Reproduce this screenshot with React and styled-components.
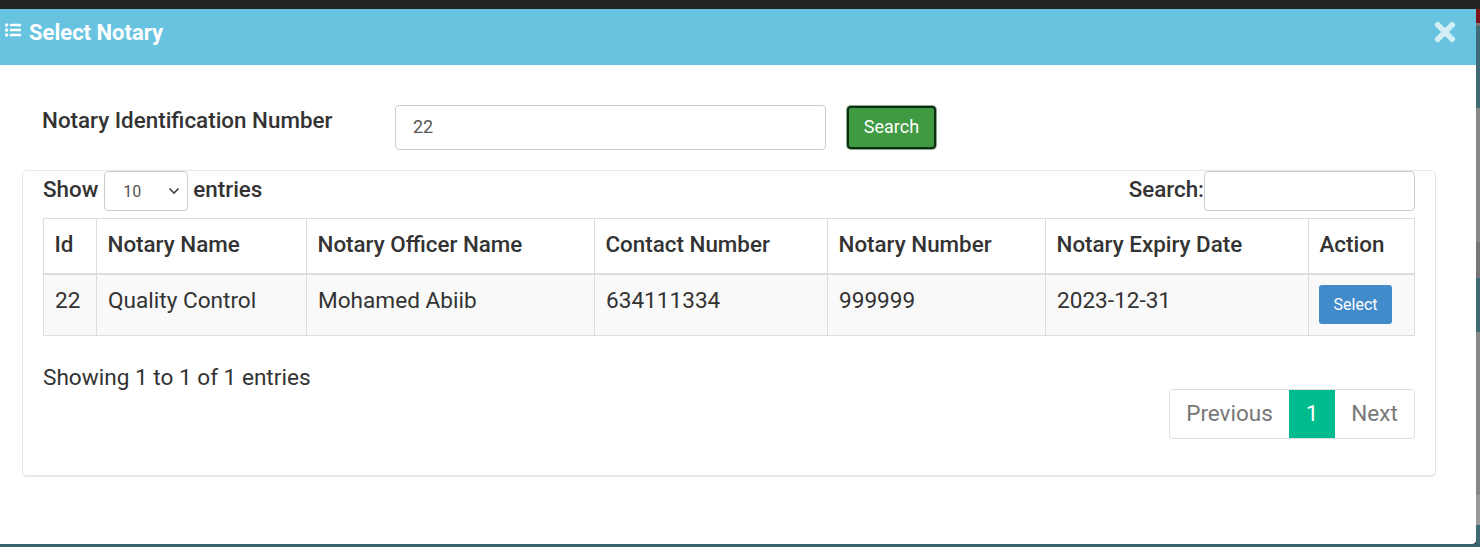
import styled, { createGlobalStyle } from "styled-components";
import { FaListUl, FaTimes } from "react-icons/fa";

const GlobalStyle = createGlobalStyle`
  html, body {
    margin: 0;
    padding: 0;
    background: #222;
    overflow: hidden;
  }
  * {
    box-sizing: border-box;
  }
`;

const Page = styled.div`
  width: 1480px;
  height: 547px;
  display: flex;
  flex-direction: column;
  background: #222;
  font-family: Roboto, "Liberation Sans", sans-serif;
  color: #333;
`;

const Middle = styled.div`
  flex: 1;
  margin-top: 9px;
  display: flex;
  min-height: 0;
`;

const Modal = styled.div`
  width: 1476px;
  background: #fff;
  border-bottom-right-radius: 4px;
  display: flex;
  flex-direction: column;
`;

const Behind = styled.div`
  flex: 1;
  display: flex;
  flex-direction: column;
`;

const Stripe = styled.div`
  height: ${({ h }) => h}px;
  flex: ${({ h }) => (h ? "none" : 1)};
  background: ${({ color }) => color};
`;

const BottomEdge = styled.div`
  height: 3px;
  background: #38626f;
`;

const Header = styled.div`
  height: 56px;
  flex: none;
  background: #67c3df;
  color: #fff;
  display: flex;
  justify-content: space-between;
  padding: 12px 16px 0 5px;
`;

const Title = styled.h4`
  margin: 0;
  display: flex;
  gap: 8px;
  font-size: 22px;
  line-height: 24px;
  font-weight: 700;

  svg {
    width: 16px;
    height: 16px;
    margin-top: 1px;
    stroke: #fff;
    stroke-width: 16px;
  }
`;

const Close = styled.span`
  color: #d4eef6;
  font-size: 30px;
  line-height: 30px;
  margin-top: -4px;

  svg {
    display: block;
    width: 30px;
    height: 30px;
  }
`;

const Body = styled.div`
  padding: 40px 40px 0 22px;
`;

const SearchRow = styled.form`
  display: flex;
  align-items: flex-start;
  height: 65px;
`;

const FieldLabel = styled.label`
  width: 373px;
  padding: 3px 0 0 20px;
  font-size: 22.4px;
  line-height: 24px;
  font-weight: 500;
`;

const TextInput = styled.input`
  width: ${({ width }) => width}px;
  height: ${({ height }) => height}px;
  border: 1px solid #ccc;
  border-radius: 4px;
  padding: 0 17px 2px;
  background: #fff;
  font: 400 18px Roboto, sans-serif;
  color: #555;
  outline: none;
`;

const SearchButton = styled.button`
  width: 89px;
  height: 43px;
  margin: 1px 0 0 21px;
  padding: 0 0 2px;
  background: #3f9a41;
  color: #fff;
  border: 2px solid #0c2f12;
  border-radius: 4px;
  box-shadow: 0 0 0 1px #8da38e;
  font: 400 18px Roboto, sans-serif;
`;

const Card = styled.div`
  width: 1414px;
  height: 307px;
  border: 1px solid #e7e7e7;
  border-bottom-width: 2px;
  border-radius: 5px;
  padding: 0 20px;
`;

const TableTop = styled.div`
  display: flex;
  justify-content: space-between;
  height: 47px;
`;

const TopLabel = styled.label`
  display: flex;
  align-items: flex-start;
  font-size: 22.4px;
  line-height: 37px;
  font-weight: 500;
`;

const PageSize = styled.select`
  appearance: none;
  width: 84px;
  height: 40px;
  margin: 0 5px 0 6px;
  padding: 0 12px 0 18px;
  border: 1px solid #ccc;
  border-radius: 4px;
  background: #fff url("data:image/svg+xml,%3Csvg xmlns='http://www.w3.org/2000/svg' width='12' height='8' viewBox='0 0 12 8'%3E%3Cpath d='M1.5 1.5 6 6l4.500-4.500' fill='none' stroke='%23444' stroke-width='1.600'/%3E%3C/svg%3E") no-repeat right 7px center;
  color: #555;
  font: 400 16px Roboto, sans-serif;
`;

const Table = styled.table`
  width: 1372px;
  table-layout: fixed;
  border-collapse: collapse;
`;

const Th = styled.th`
  height: 55px;
  padding: 0 11px 4px 10.5px;
  border: 1px solid #ddd;
  border-bottom-width: 2px;
  font-size: 22.4px;
  font-weight: 500;
  text-align: left;
`;

const Td = styled.td`
  height: 62px;
  padding: 0 11px 8px;
  border: 1px solid #ddd;
  background: #f9f9f9;
  font-size: 22.6px;
  font-weight: 400;
`;

const ActionTd = styled(Td)`
  padding: 0 10px;
`;

const SelectButton = styled.button`
  display: block;
  width: 73px;
  height: 39px;
  border: none;
  border-radius: 3px;
  background: #428bca;
  color: #fff;
  font: 400 16px Roboto, sans-serif;
`;

const TableBottom = styled.div`
  display: flex;
  flex-direction: column;
  padding-top: 29px;
`;

const Info = styled.div`
  font-size: 22.6px;
  line-height: 26px;
  font-weight: 400;
`;

const Pager = styled.div`
  align-self: flex-end;
  display: flex;
  height: 50px;
  margin-top: -2px;
  border: 1px solid #ddd;
  border-radius: 4px;
  overflow: hidden;
`;

const PagerItem = styled.a`
  display: flex;
  align-items: center;
  justify-content: center;
  width: ${({ width }) => width}px;
  padding-bottom: 2px;
  background: ${({ active }) => (active ? "#00bb8d" : "#fff")};
  color: ${({ active }) => (active ? "#fff" : "#777")};
  font-size: 22.5px;
`;

const columns = [
  { label: "Id", width: 53, value: "22" },
  { label: "Notary Name", width: 210, value: "Quality Control" },
  { label: "Notary Officer Name", width: 288, value: "Mohamed Abiib" },
  { label: "Contact Number", width: 233, value: "634111334" },
  { label: "Notary Number", width: 218, value: "999999" },
  { label: "Notary Expiry Date", width: 263, value: "2023-12-31" },
];

// what shows of the page behind the modal, top to bottom
const stripes = [
  { h: 14, color: "#7d1418" },
  { h: 3, color: "#777" },
  { h: 82, color: "#3e6a75" },
  { h: 134, color: "#888" },
  { h: 36, color: "#777" },
  { h: 54, color: "#3e6a75" },
  { h: 163, color: "#888" },
  { h: 30, color: "#999" },
  { h: 0, color: "#3e6a75" },
];

export default function App() {
  return (
    <Page>
      <GlobalStyle />
      <Middle>
        <Modal>
          <Header>
            <Title>
              <FaListUl />
              Select Notary
            </Title>
            <Close>
              <FaTimes />
            </Close>
          </Header>
          <Body>
            <SearchRow onSubmit={(e) => e.preventDefault()}>
              <FieldLabel>Notary Identification Number</FieldLabel>
              <TextInput width={431} height={45} defaultValue="22" />
              <SearchButton>Search</SearchButton>
            </SearchRow>
            <Card>
              <TableTop>
                <TopLabel>
                  Show
                  <PageSize defaultValue="10">
                    <option>10</option>
                    <option>25</option>
                    <option>50</option>
                  </PageSize>
                  entries
                </TopLabel>
                <TopLabel>
                  Search:
                  <TextInput width={211} height={40} />
                </TopLabel>
              </TableTop>
              <Table>
                <colgroup>
                  {columns.map((col) => (
                    <col key={col.label} width={col.width} />
                  ))}
                  <col />
                </colgroup>
                <thead>
                  <tr>
                    {columns.map((col) => (
                      <Th key={col.label}>{col.label}</Th>
                    ))}
                    <Th>Action</Th>
                  </tr>
                </thead>
                <tbody>
                  <tr>
                    {columns.map((col) => (
                      <Td key={col.label}>{col.value}</Td>
                    ))}
                    <ActionTd>
                      <SelectButton>Select</SelectButton>
                    </ActionTd>
                  </tr>
                </tbody>
              </Table>
              <TableBottom>
                <Info>Showing 1 to 1 of 1 entries</Info>
                <Pager>
                  <PagerItem width={119}>Previous</PagerItem>
                  <PagerItem width={46} active>
                    1
                  </PagerItem>
                  <PagerItem width={79}>Next</PagerItem>
                </Pager>
              </TableBottom>
            </Card>
          </Body>
        </Modal>
        <Behind>
          {stripes.map((stripe, i) => (
            <Stripe key={i} h={stripe.h} color={stripe.color} />
          ))}
        </Behind>
      </Middle>
      <BottomEdge />
    </Page>
  );
}
